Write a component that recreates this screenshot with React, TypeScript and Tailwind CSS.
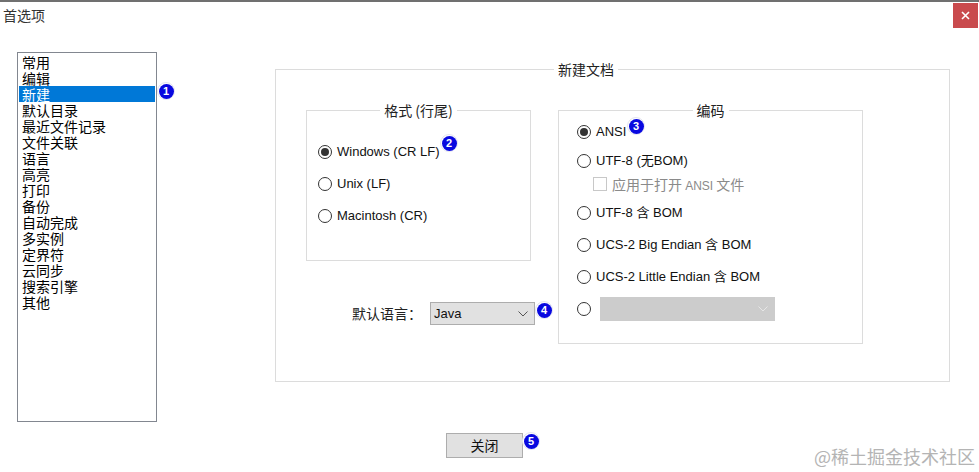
import React from "react";

const ui = { fontFamily: '"Liberation Sans", "Noto Sans CJK SC", sans-serif' };
const cjk = { fontFamily: '"Noto Sans CJK SC", "Liberation Sans", sans-serif' };

const pages = [
  "常用",
  "编辑",
  "新建",
  "默认目录",
  "最近文件记录",
  "文件关联",
  "语言",
  "高亮",
  "打印",
  "备份",
  "自动完成",
  "多实例",
  "定界符",
  "云同步",
  "搜索引擎",
  "其他",
];

const Badge = ({ n, className }: { n: number; className: string }) => (
  <span
    className={`absolute flex h-[18px] w-[18px] items-center justify-center rounded-full border border-[#e4e4f0] bg-white ${className}`}
  >
    <span
      className="flex h-[15px] w-[15px] items-center justify-center rounded-full bg-[#0808e0] text-[11px] font-bold leading-none text-white"
      style={ui}
    >
      {n}
    </span>
  </span>
);

const Radio = ({ checked, label }: { checked?: boolean; label?: string }) => (
  <div className="flex h-[20px] items-center">
    <span className="flex h-[14px] w-[14px] items-center justify-center rounded-full border border-[#333] bg-white">
      {checked && <span className="h-[8px] w-[8px] rounded-full bg-[#333]" />}
    </span>
    {label && <span className="ml-[5px] text-[13px] text-[#111]">{label}</span>}
  </div>
);

const Chevron = ({ color }: { color: string }) => (
  <svg width="10" height="6" viewBox="0 0 10 6">
    <path d="M0.5 0.5 L5 5 L9.5 0.5" fill="none" stroke={color} strokeWidth="1" />
  </svg>
);

export default function App() {
  return (
    <div
      className="relative h-[472px] w-[979px] overflow-hidden border-t-2 border-[#707070] bg-white"
      style={ui}
    >
      {/* title bar */}
      <div className="flex h-[30px] justify-between">
        <span className="ml-[3px] mt-[3px] text-[14px] text-[#333]" style={cjk}>
          首选项
        </span>
        <div className="mr-[1px] mt-[1px] flex h-[25px] w-[25px] items-center justify-center bg-[#c94a4d]">
          <svg width="9" height="9" viewBox="0 0 9 9">
            <path d="M1 1 L8 8 M8 1 L1 8" stroke="#fff" strokeWidth="1.6" />
          </svg>
        </div>
      </div>

      <div className="flex items-start">
        {/* page list */}
        <div className="relative ml-[17px] mt-[20px] h-[370px] w-[140px] border border-[#828790] p-[1px]">
          {pages.map((p) => (
            <div
              key={p}
              className={`h-[16px] pl-[3px] text-[14px] leading-[16px] ${
                p === "新建" ? "bg-[#0078d7] text-white" : "text-black"
              }`}
              style={cjk}
            >
              {p}
            </div>
          ))}
          <Badge n={1} className="left-[139px] top-[29px]" />
        </div>

        {/* new document group */}
        <fieldset className="ml-[118px] mt-[28px] h-[322px] w-[675px] border border-[#dcdcdc]">
          <legend className="ml-[278px] px-[4px] text-[14px] leading-[18px] text-[#222]" style={cjk}>
            新建文档
          </legend>
          <div className="flex pl-[30px] pt-[23px]">
            <div className="flex w-[225px] shrink-0 flex-col">
              <fieldset className="h-[160px] w-[225px] border border-[#dcdcdc]">
                <legend className="mx-auto px-[4px] text-[14px] leading-[18px] text-[#222]" style={cjk}>
                  格式 (行尾)
                </legend>
                <div className="flex flex-col gap-[12px] pl-[11px] pt-[23px]">
                  <div className="relative">
                    <Radio checked label="Windows (CR LF)" />
                    <Badge n={2} className="left-[122px] top-[-8px]" />
                  </div>
                  <Radio label="Unix (LF)" />
                  <Radio label="Macintosh (CR)" />
                </div>
              </fieldset>
              <div className="relative mt-[41px] flex w-[229px] items-center pl-[46px]">
                <span className="w-[78px] shrink-0 text-[14px] text-[#222]" style={cjk}>
                  默认语言：
                </span>
                <div className="flex h-[23px] w-[105px] shrink-0 items-center justify-between border border-[#adadad] bg-[#e1e1e1] pl-[3px] pr-[6px]">
                  <span className="text-[13px] text-[#111]">Java</span>
                  <Chevron color="#555" />
                </div>
                <Badge n={4} className="left-[229px] top-[-1px]" />
              </div>
            </div>

            <fieldset className="ml-[27px] h-[243px] w-[305px] shrink-0 border border-[#dcdcdc]">
              <legend className="mx-auto px-[4px] text-[14px] leading-[18px] text-[#222]" style={cjk}>
                编码
              </legend>
              <div className="flex flex-col pl-[18px] pt-[3px]">
                <div className="relative">
                  <Radio checked label="ANSI" />
                  <Badge n={3} className="left-[50px] top-[-5px]" />
                </div>
                <div className="mt-[9px]">
                  <Radio label="UTF-8 (无BOM)" />
                </div>
                <div className="mt-[3px] flex h-[20px] items-center pl-[16px]">
                  <span className="h-[14px] w-[14px] border border-[#c8c8c8] bg-white" />
                  <span className="ml-[5px] text-[14px] text-[#8a8a8a]" style={cjk}>
                    应用于打开 <span className="text-[12px]" style={ui}>ANSI</span> 文件
                  </span>
                </div>
                <div className="mt-[9px]">
                  <Radio label="UTF-8 含 BOM" />
                </div>
                <div className="mt-[12px]">
                  <Radio label="UCS-2 Big Endian 含 BOM" />
                </div>
                <div className="mt-[12px]">
                  <Radio label="UCS-2 Little Endian 含 BOM" />
                </div>
                <div className="mt-[10px] flex h-[24px] items-center">
                  <Radio />
                  <div className="ml-[9px] flex h-[24px] w-[175px] items-center justify-end bg-[#cccccc] pr-[7px]">
                    <Chevron color="#e6e6e6" />
                  </div>
                </div>
              </div>
            </fieldset>
          </div>
        </fieldset>
      </div>

      {/* bottom button */}
      <div className="relative ml-[446px] mt-[11px] w-fit">
        <button
          className="flex h-[25px] w-[77px] items-center justify-center border border-[#adadad] bg-[#e1e1e1] text-[14px] text-[#111]"
          style={cjk}
        >
          关闭
        </button>
        <Badge n={5} className="left-[76px] top-[-1px]" />
      </div>

      <span
        className="absolute bottom-[5px] right-[4px] text-[18px] leading-[22px] text-[#b4b4b4]"
        style={{ fontFamily: '"Noto Sans CJK SC", serif' }}
      >
        @稀土掘金技术社区
      </span>
    </div>
  );
}
